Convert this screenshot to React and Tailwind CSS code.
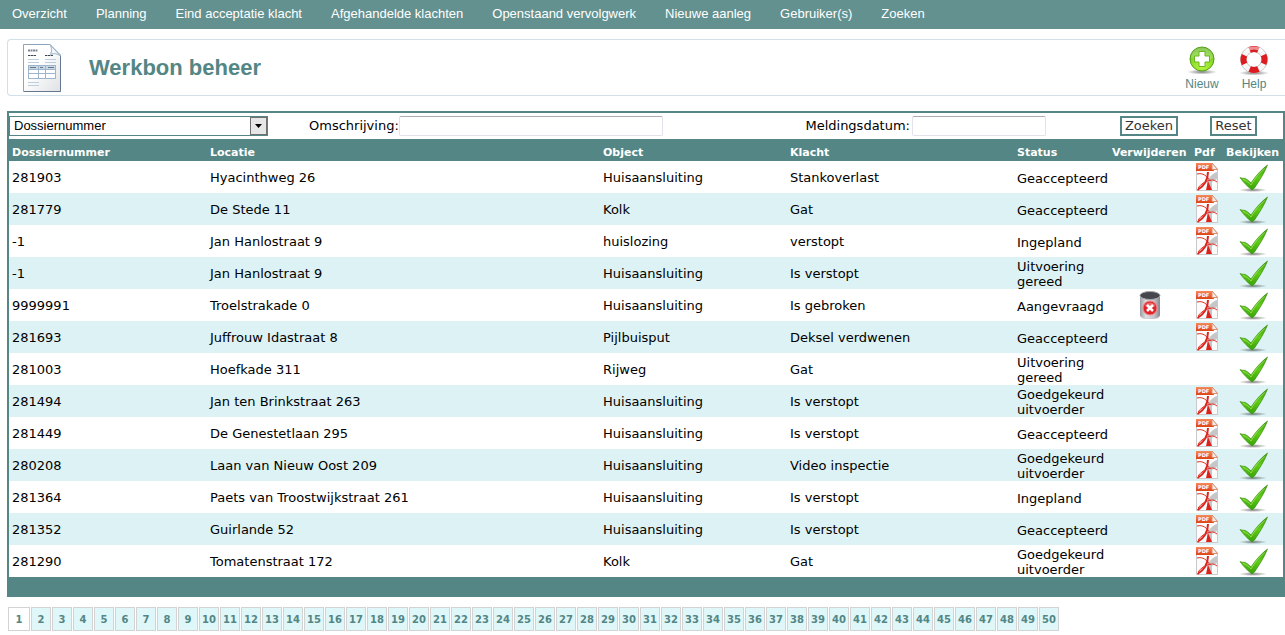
import { useState } from "react";

const menu = [
  "Overzicht",
  "Planning",
  "Eind acceptatie klacht",
  "Afgehandelde klachten",
  "Openstaand vervolgwerk",
  "Nieuwe aanleg",
  "Gebruiker(s)",
  "Zoeken",
];

const orders = [
  { nr: "281903", locatie: "Hyacinthweg 26", object: "Huisaansluiting", klacht: "Stankoverlast", status: "Geaccepteerd", pdf: true },
  { nr: "281779", locatie: "De Stede 11", object: "Kolk", klacht: "Gat", status: "Geaccepteerd", pdf: true },
  { nr: "-1", locatie: "Jan Hanlostraat 9", object: "huislozing", klacht: "verstopt", status: "Ingepland", pdf: true },
  { nr: "-1", locatie: "Jan Hanlostraat 9", object: "Huisaansluiting", klacht: "Is verstopt", status: "Uitvoering gereed", pdf: false },
  { nr: "9999991", locatie: "Troelstrakade 0", object: "Huisaansluiting", klacht: "Is gebroken", status: "Aangevraagd", pdf: true, removable: true },
  { nr: "281693", locatie: "Juffrouw Idastraat 8", object: "Pijlbuisput", klacht: "Deksel verdwenen", status: "Geaccepteerd", pdf: true },
  { nr: "281003", locatie: "Hoefkade 311", object: "Rijweg", klacht: "Gat", status: "Uitvoering gereed", pdf: false },
  { nr: "281494", locatie: "Jan ten Brinkstraat 263", object: "Huisaansluiting", klacht: "Is verstopt", status: "Goedgekeurd uitvoerder", pdf: true },
  { nr: "281449", locatie: "De Genestetlaan 295", object: "Huisaansluiting", klacht: "Is verstopt", status: "Geaccepteerd", pdf: true },
  { nr: "280208", locatie: "Laan van Nieuw Oost 209", object: "Huisaansluiting", klacht: "Video inspectie", status: "Goedgekeurd uitvoerder", pdf: true },
  { nr: "281364", locatie: "Paets van Troostwijkstraat 261", object: "Huisaansluiting", klacht: "Is verstopt", status: "Ingepland", pdf: true },
  { nr: "281352", locatie: "Guirlande 52", object: "Huisaansluiting", klacht: "Is verstopt", status: "Geaccepteerd", pdf: true },
  { nr: "281290", locatie: "Tomatenstraat 172", object: "Kolk", klacht: "Gat", status: "Goedgekeurd uitvoerder", pdf: true },
];

const pages = Array.from({ length: 50 }, (_, i) => i + 1);

// Gradients shared by all icons, rendered once per page
const IconDefs = () => (
  <svg width="0" height="0" className="absolute" aria-hidden="true">
    <defs>
      <linearGradient id="check" x1="0" y1="0" x2="0" y2="1">
        <stop offset="0" stopColor="#3f9a10" />
        <stop offset="0.5" stopColor="#62cc18" />
        <stop offset="1" stopColor="#37a008" />
      </linearGradient>
      <radialGradient id="shadow">
        <stop offset="0" stopColor="#000" stopOpacity="0.5" />
        <stop offset="1" stopColor="#000" stopOpacity="0" />
      </radialGradient>
      <linearGradient id="pdfBar" x1="0" y1="0" x2="0" y2="1">
        <stop offset="0" stopColor="#f58a5c" />
        <stop offset="1" stopColor="#dd4316" />
      </linearGradient>
      <linearGradient id="can" x1="0" y1="0" x2="1" y2="0">
        <stop offset="0" stopColor="#9b9ba2" />
        <stop offset="0.3" stopColor="#dedee3" />
        <stop offset="0.7" stopColor="#c4c4ca" />
        <stop offset="1" stopColor="#88888e" />
      </linearGradient>
      <radialGradient id="green" cx="0.5" cy="0.8" r="0.8">
        <stop offset="0" stopColor="#bdf542" />
        <stop offset="0.6" stopColor="#86d828" />
        <stop offset="1" stopColor="#5cb01a" />
      </radialGradient>
      <linearGradient id="paper" x1="0" y1="0" x2="1" y2="1">
        <stop offset="0.4" stopColor="#fff" />
        <stop offset="1" stopColor="#dfe1e5" />
      </linearGradient>
    </defs>
  </svg>
);

const InvoiceIcon = () => (
  <svg width="40" height="50" viewBox="0 0 40 50" fill="none" aria-hidden="true">
    <path d="M1.5 1.5H28L38.5 12V48.5H1.5Z" fill="url(#paper)" stroke="#8ea5bb" />
    <path d="M38.5 13V48.5H2" stroke="#66788f" />
    <path d="M28 1.5C30 5 30 8 28.5 11.5C32 10 35 10.5 38.5 13Z" fill="#f2f6fa" stroke="#9db3c8" />
    <path d="M6 7.5H16" stroke="#7b8794" strokeWidth="2" strokeDasharray="2 0.5" />
    <path d="M6 12.5H14M23 12.5H31" stroke="#3d4650" strokeDasharray="2.5 0.5" />
    <path d="M6 16.5H17M6 19.5H17M23 16.5H34M23 19.5H34M6 39.5H17M6 42.5H17" stroke="#bccddd" />
    <rect x="6.5" y="22.5" width="27" height="13" fill="#fff" stroke="#9db5cd" />
    <path d="M7 23H33V26H7Z" fill="#c9d8e6" />
    <path d="M6 26.5H34M6 30.5H34M16.5 22V36M23.5 22V36" stroke="#9db5cd" />
    <path d="M8 24.5H14M18 24.5H21M26 24.5H32" stroke="#6b7683" />
  </svg>
);

const PlusIcon = () => (
  <svg width="32" height="30" viewBox="0 0 32 30" fill="none" aria-hidden="true">
    <ellipse cx="16" cy="26" rx="15" ry="2.5" fill="url(#shadow)" />
    <circle cx="16" cy="13" r="12" fill="url(#green)" stroke="#53a01a" />
    <path d="M5 12A11 10.5 0 0 1 27 12C21 15 11 11 5 12Z" fill="#fff" opacity="0.25" />
    <path d="M13 5.5H19V10H23.5V16H19V20.5H13V16H8.5V10H13Z" fill="#fff" stroke="#69b51f" />
  </svg>
);

const HelpIcon = () => (
  <svg width="32" height="30" viewBox="0 0 32 30" fill="none" aria-hidden="true">
    <ellipse cx="16" cy="27" rx="15" ry="2.5" fill="url(#shadow)" />
    <circle cx="16" cy="13.5" r="10.5" stroke="#c4c4c8" strokeWidth="6.5" />
    <circle cx="16" cy="13.5" r="10.5" stroke="#f6f6f7" strokeWidth="5" />
    <circle
      cx="16"
      cy="13.5"
      r="10.5"
      stroke="#dc1c20"
      strokeWidth="6"
      pathLength="80"
      strokeDasharray="11 9"
      transform="rotate(-25 16 13.5)"
    />
    <path d="M8 5C12 1 20 1 24 5" stroke="#fff" strokeWidth="3" opacity="0.5" />
  </svg>
);

const PdfIcon = () => (
  <svg width="24" height="30" viewBox="0 0 24 30" fill="none" aria-hidden="true">
    <path d="M1.5 1.5H17L22.5 7V28.5H1.5Z" fill="#fbfbfb" stroke="#c9c9cb" />
    <path d="M12 20C14 15 17 12 22 10V17L17 20V28H12Z" fill="#c6c6c8" />
    <path d="M1 1H17L19 9H1Z" fill="url(#pdfBar)" />
    <path d="M17 1L22.5 7.5H17Z" fill="#eee" stroke="#e58b69" />
    <text x="3" y="7" fontSize="5" fontWeight="bold" fill="#fff" fontFamily="DejaVu Sans, sans-serif">
      PDF
    </text>
    <path d="M2 12C8 10.5 12 14 15 19C17 17 19 18 22 20" stroke="#e0332a" />
    <path d="M13 10C13 18 9 24 2.5 28" stroke="#dd241c" strokeWidth="2" />
    <path d="M3 26C6 22 10 19 16 18" stroke="#e0332a" />
    <path d="M13 19L17 28H11Z" fill="#d8241c" />
  </svg>
);

const CheckIcon = () => (
  <svg width="30" height="30" viewBox="0 0 30 30" fill="none" aria-hidden="true">
    <ellipse cx="15" cy="28" rx="14" ry="2" fill="url(#shadow)" />
    <path
      d="M2 15.5C4 16.5 5.5 16 7 16.5C9.5 17.5 11 19 13 21C18 13.5 23 8 29.5 3C26 12 21 19 16.5 26L14 28C10 25 5 20 2 15.5Z"
      fill="url(#check)"
      stroke="#3a9412"
      strokeWidth="0.7"
    />
    <path d="M5 17.5C9 18.5 11 21 13 23C17 16 21 11 27 6.5" stroke="#a5ea62" opacity="0.7" />
  </svg>
);

const TrashIcon = () => (
  <svg width="24" height="30" viewBox="0 0 24 30" fill="none" aria-hidden="true">
    <ellipse cx="12" cy="27.5" rx="11" ry="2" fill="url(#shadow)" />
    <path d="M2 5V25C2 30 22 30 22 25V5Z" fill="url(#can)" />
    <ellipse cx="12" cy="5.5" rx="10" ry="4" fill="#46464d" stroke="#a6a6ac" />
    <circle cx="12" cy="18" r="7" fill="#e0242a" stroke="#f08a8a" />
    <path d="M6.5 16A6 6 0 0 1 17.5 16C14 18 10 17 6.5 16Z" fill="#fff" opacity="0.3" />
    <path d="M9 15L15 21M15 15L9 21" stroke="#fff" strokeWidth="2.5" />
  </svg>
);

const App = () => {
  const [page, setPage] = useState(1);
  const [field, setField] = useState("Dossiernummer");
  const [omschrijving, setOmschrijving] = useState("");
  const [datum, setDatum] = useState("");

  const handleReset = () => {
    setField("Dossiernummer");
    setOmschrijving("");
    setDatum("");
  };

  return (
    <div className="bg-white font-['Verdana','DejaVu_Sans',sans-serif] text-[13px] leading-4 text-black">
      <IconDefs />

      <nav className="flex h-[29px] items-center gap-[29px] bg-[#639190] pb-0.5 pl-3 font-['Liberation_Sans',Arial,sans-serif] text-white">
        {menu.map((item) => (
          <a key={item} href="#" className="whitespace-nowrap">
            {item}
          </a>
        ))}
      </nav>

      <header className="mt-2.5 ml-[7px] flex h-[57px] items-center rounded-l border border-r-0 border-[#d3dfe7] pr-[13px] pl-3.5 font-['Liberation_Sans',Arial,sans-serif] text-[#538684]">
        <InvoiceIcon />
        <h1 className="ml-[27px] flex-1 text-[22px] leading-7 font-bold">
          Werkbon beheer
        </h1>
        <div className="flex gap-4 pt-0.5">
          <a href="#" className="flex w-9 flex-col items-center">
            <PlusIcon />
            <span className="text-xs">Nieuw</span>
          </a>
          <a href="#" className="flex w-9 flex-col items-center">
            <HelpIcon />
            <span className="text-xs">Help</span>
          </a>
        </div>
      </header>

      <main className="mt-[15px] ml-[7px] border-2 border-[#538684]">
        <form
          className="flex h-[26px] items-center"
          onSubmit={(e) => e.preventDefault()}
        >
          <div className="relative h-5 w-[259px] font-['Liberation_Sans',Arial,sans-serif]">
            <select
              aria-label="Zoekveld"
              className="block h-5 w-full appearance-none border border-[#538684] bg-white pl-1 leading-4"
              value={field}
              onChange={(e) => setField(e.target.value)}
            >
              <option>Dossiernummer</option>
              <option>Locatie</option>
              <option>Object</option>
              <option>Klacht</option>
              <option>Status</option>
            </select>
            <span className="pointer-events-none absolute inset-y-px right-px flex w-[17px] items-center justify-center border border-[#707070] bg-[#e6e6e6]">
              <svg width="7" height="4" viewBox="0 0 7 4" aria-hidden="true">
                <path d="M0 0H7L3.5 4Z" fill="#000" />
              </svg>
            </span>
          </div>

          <label htmlFor="omschrijving" className="ml-[41px] w-[90px] whitespace-nowrap">
            Omschrijving:
          </label>
          <input
            id="omschrijving"
            type="text"
            className="h-5 w-[264px] rounded-xs border border-[#e2e3ea] border-t-[#abadb3] px-1"
            value={omschrijving}
            onChange={(e) => setOmschrijving(e.target.value)}
          />

          <label htmlFor="datum" className="mr-0.5 ml-auto whitespace-nowrap">
            Meldingsdatum:
          </label>
          <input
            id="datum"
            type="text"
            className="h-5 w-[134px] rounded-xs border border-[#e2e3ea] border-t-[#abadb3] px-1"
            value={datum}
            onChange={(e) => setDatum(e.target.value)}
          />

          <button
            type="submit"
            className="ml-[74px] h-5 w-[58px] border-2 border-[#538684] text-[#333]"
          >
            Zoeken
          </button>
          <button
            type="button"
            onClick={handleReset}
            className="mr-[26px] ml-8 h-5 w-[47px] border-2 border-[#538684] text-[#333]"
          >
            Reset
          </button>
        </form>

        <table className="w-full table-fixed border-collapse text-left">
          <colgroup>
            <col className="w-[198px]" />
            <col />
            <col className="w-[187px]" />
            <col className="w-[227px]" />
            <col className="w-[95px]" />
            <col className="w-[82px]" />
            <col className="w-8" />
            <col className="w-[60px]" />
          </colgroup>
          <thead>
            <tr className="h-[22px] bg-[#538684] text-[11px] whitespace-nowrap text-white">
              <th className="px-[3px] pt-1.5">Dossiernummer</th>
              <th className="px-[3px] pt-1.5">Locatie</th>
              <th className="px-[3px] pt-1.5">Object</th>
              <th className="px-[3px] pt-1.5">Klacht</th>
              <th className="px-[3px] pt-1.5">Status</th>
              <th className="px-[3px] pt-1.5">Verwijderen</th>
              <th className="px-[3px] pt-1.5">Pdf</th>
              <th className="px-[3px] pt-1.5">Bekijken</th>
            </tr>
          </thead>
          <tbody>
            {orders.map((order, i) => (
              <tr key={i} className="h-8 even:bg-[#ddf2f4]">
                <td className="px-[3px] pt-0.5">{order.nr}</td>
                <td className="px-[3px] pt-0.5">{order.locatie}</td>
                <td className="px-[3px] pt-0.5">{order.object}</td>
                <td className="px-[3px] pt-0.5">{order.klacht}</td>
                <td className="pt-0.5 pl-[3px] leading-[15px]">{order.status}</td>
                <td>
                  {order.removable && (
                    <button type="button" aria-label="Verwijderen" className="mx-auto block">
                      <TrashIcon />
                    </button>
                  )}
                </td>
                <td>
                  {order.pdf && (
                    <a href="#" aria-label="Pdf" className="flex justify-center">
                      <PdfIcon />
                    </a>
                  )}
                </td>
                <td>
                  <a href="#" aria-label="Bekijken" className="flex justify-center">
                    <CheckIcon />
                  </a>
                </td>
              </tr>
            ))}
          </tbody>
        </table>
        <div className="h-[18px] bg-[#538684]" />
      </main>

      <div className="mt-2.5 ml-2 flex gap-px text-[10px] font-bold text-[#538684]">
        {pages.map((nr) => (
          <button
            key={nr}
            type="button"
            onClick={() => setPage(nr)}
            className={
              nr === page
                ? "h-6 w-[22px] border border-[#d3d3d3] bg-white pt-px"
                : "h-6 w-5 border border-[#d3d3d3] bg-[#e0f7f9] pt-px"
            }
          >
            {nr}
          </button>
        ))}
      </div>
    </div>
  );
};

export default App;
